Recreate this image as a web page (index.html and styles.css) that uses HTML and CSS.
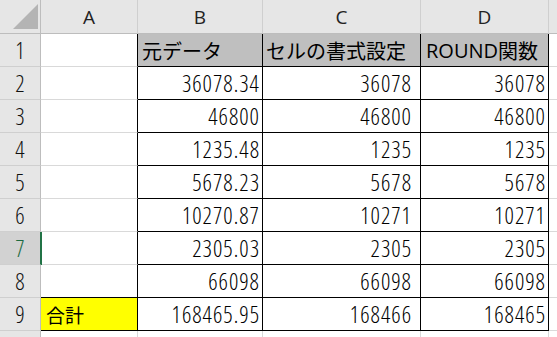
FILE: index.html
```html
<!DOCTYPE html>
<html lang="ja">
<head>
<meta charset="utf-8">
<title>ROUND</title>
<link rel="stylesheet" href="styles.css">
</head>
<body>
<div class="sheet">
  <div class="c corner"><svg class="tri" width="40" height="33" viewBox="0 0 40 33"><polygon points="13,29 38,29 38,4" fill="#b4b4b4"/></svg></div>
  <div class="c hd">A</div>
  <div class="c hd">B</div>
  <div class="c hd">C</div>
  <div class="c hd">D</div>
  <div class="c hd"></div>

  <div class="c rh">1</div>
  <div class="c la"></div>
  <div class="c box title tb">元データ</div>
  <div class="c box title tc">セルの書式設定</div>
  <div class="c box title td"><span class="lat">ROUND</span>関数</div>
  <div class="c"></div>

  <div class="c rh">2</div>
  <div class="c la"></div>
  <div class="c box num">36078.34</div>
  <div class="c box num pc">36078</div>
  <div class="c box num">36078</div>
  <div class="c"></div>

  <div class="c rh">3</div>
  <div class="c la"></div>
  <div class="c box num">46800</div>
  <div class="c box num pc">46800</div>
  <div class="c box num">46800</div>
  <div class="c"></div>

  <div class="c rh">4</div>
  <div class="c la"></div>
  <div class="c box num">1235.48</div>
  <div class="c box num pc">1235</div>
  <div class="c box num">1235</div>
  <div class="c"></div>

  <div class="c rh">5</div>
  <div class="c la"></div>
  <div class="c box num">5678.23</div>
  <div class="c box num pc">5678</div>
  <div class="c box num">5678</div>
  <div class="c"></div>

  <div class="c rh">6</div>
  <div class="c la"></div>
  <div class="c box num">10270.87</div>
  <div class="c box num pc">10271</div>
  <div class="c box num">10271</div>
  <div class="c"></div>

  <div class="c rh sel">7</div>
  <div class="c la"></div>
  <div class="c box num">2305.03</div>
  <div class="c box num pc">2305</div>
  <div class="c box num">2305</div>
  <div class="c"></div>

  <div class="c rh">8</div>
  <div class="c la lb"></div>
  <div class="c box num">66098</div>
  <div class="c box num pc">66098</div>
  <div class="c box num">66098</div>
  <div class="c"></div>

  <div class="c rh">9</div>
  <div class="c la box total">合計</div>
  <div class="c box num">168465.95</div>
  <div class="c box num pc">168466</div>
  <div class="c box num">168465</div>
  <div class="c"></div>

  <div class="c rh"></div>
  <div class="c"></div>
  <div class="c"></div>
  <div class="c"></div>
  <div class="c"></div>
  <div class="c"></div>
</div>
</body>
</html>
```

FILE: styles.css
```css
html, body {
  margin: 0;
  padding: 0;
  background: #ffffff;
  overflow: hidden;
}

.sheet {
  display: grid;
  grid-template-columns: 41px 97px 125px 158px 128px 40px;
  grid-template-rows: 34px repeat(10, 33px);
  width: 557px;
  height: 337px;
  overflow: hidden;
  font-family: "Open Sans", "Liberation Sans", sans-serif;
  font-stretch: 75%;
  font-weight: 300;
  color: #000;
}

.c {
  box-sizing: border-box;
  display: flex;
  align-items: center;
  overflow: hidden;
  white-space: nowrap;
  border-right: 1px solid #d9d9d9;
  border-bottom: 1px solid #d9d9d9;
}

.corner {
  background: #e6e6e6;
  border-right-color: #bdbdbd;
  border-bottom-color: #bdbdbd;
  position: relative;
}

.tri {
  position: absolute;
  left: 0;
  top: 0;
}

.hd {
  background: #e6e6e6;
  justify-content: center;
  font-size: 19px;
  font-stretch: 100%;
  font-weight: 400;
  color: #222;
  border-right-color: #cfcfcf;
  border-bottom-color: #bdbdbd;
  padding-top: 1px;
}

.rh {
  background: #e6e6e6;
  justify-content: center;
  font-size: 23px;
  letter-spacing: 1px;
  padding-left: 1px;
  color: #111;
  border-right-color: #bdbdbd;
  border-bottom-color: #cfcfcf;
}

.rh.sel {
  background: #d2d2d2;
  color: #1d6b41;
  border-right-color: #217346;
  box-shadow: 1px 0 0 #217346;
  position: relative;
  z-index: 1;
}

.la {
  border-right-color: #000;
}

.lb {
  border-bottom-color: #000;
}

.box {
  border-right-color: #000;
  border-bottom-color: #000;
}

.title {
  background: #bfbfbf;
  font-family: "Noto Sans CJK JP", sans-serif;
  font-stretch: 100%;
  font-weight: 400;
  font-size: 20px;
  padding-left: 4px;
}

.tc {
  padding-left: 3px;
}

.td {
  padding-left: 5px;
}

.lat {
  font-family: "Open Sans", "Liberation Sans", sans-serif;
  font-stretch: 100%;
  font-weight: 400;
  font-size: 20px;
}

.num {
  justify-content: flex-end;
  font-size: 23px;
  letter-spacing: 1px;
  padding-right: 2px;
}

.pc {
  padding-right: 8px;
}

.total {
  background: #ffff00;
  font-family: "Noto Sans CJK JP", sans-serif;
  font-stretch: 100%;
  font-weight: 400;
  font-size: 19px;
  padding-left: 5px;
}
```
